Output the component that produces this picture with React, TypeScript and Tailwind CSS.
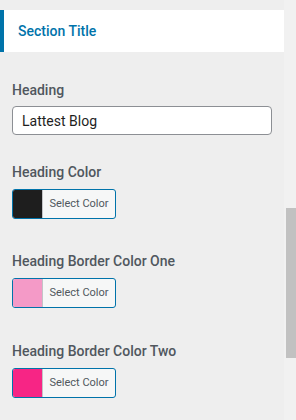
import React from 'react';

interface ColorFieldProps {
    label: string;
    color: string;
    className?: string;
}

function ColorField({ label, color, className }: ColorFieldProps) {
    return (
        <div className={className}>
            <div className="text-[14px] leading-5 font-medium text-[#50575e]">{label}</div>
            <button
                type="button"
                className="mt-[7px] flex h-[30px] w-[104px] items-stretch overflow-hidden rounded-[3px] border border-[#0073aa] bg-[#f6f7f7]"
            >
                <span className="w-[30px] border-r border-[#c3c4c7]" style={{ backgroundColor: color }} />
                <span className="flex flex-1 items-center justify-center text-[11px] text-[#50575e]">Select Color</span>
            </button>
        </div>
    );
}

export default function App() {
    return (
        <div className="flex h-[420px] w-[296px] overflow-hidden bg-[#eeeeee] font-['Roboto',sans-serif]">
            <div className="w-[284px] pt-[10px]">
                <div className="flex h-[42px] items-center border-l-4 border-[#0073aa] bg-white pl-[14px]">
                    <span className="text-[14px] font-medium text-[#0073aa]">Section Title</span>
                </div>
                <div className="px-3">
                    <div className="mt-[28px]">
                        <div className="text-[14px] leading-5 font-medium text-[#50575e]">Heading</div>
                        <input
                            type="text"
                            defaultValue="Lattest Blog"
                            className="mt-[6px] h-[29px] w-[260px] rounded-[4px] border border-[#8c8f94] bg-white px-[9px] text-[14px] text-[#1e1e1e] outline-none"
                        />
                    </div>
                    <ColorField label="Heading Color" color="#1e1e1e" className="mt-[27px]" />
                    <ColorField label="Heading Border Color One" color="#f49ac7" className="mt-[32px]" />
                    <ColorField label="Heading Border Color Two" color="#f72585" className="mt-[33px]" />
                </div>
            </div>
            <div className="flex w-[12px] flex-col bg-[#f1f1f1]">
                <div className="mt-[208px] ml-[2px] h-[150px] bg-[#c1c1c1]" />
            </div>
        </div>
    );
}
